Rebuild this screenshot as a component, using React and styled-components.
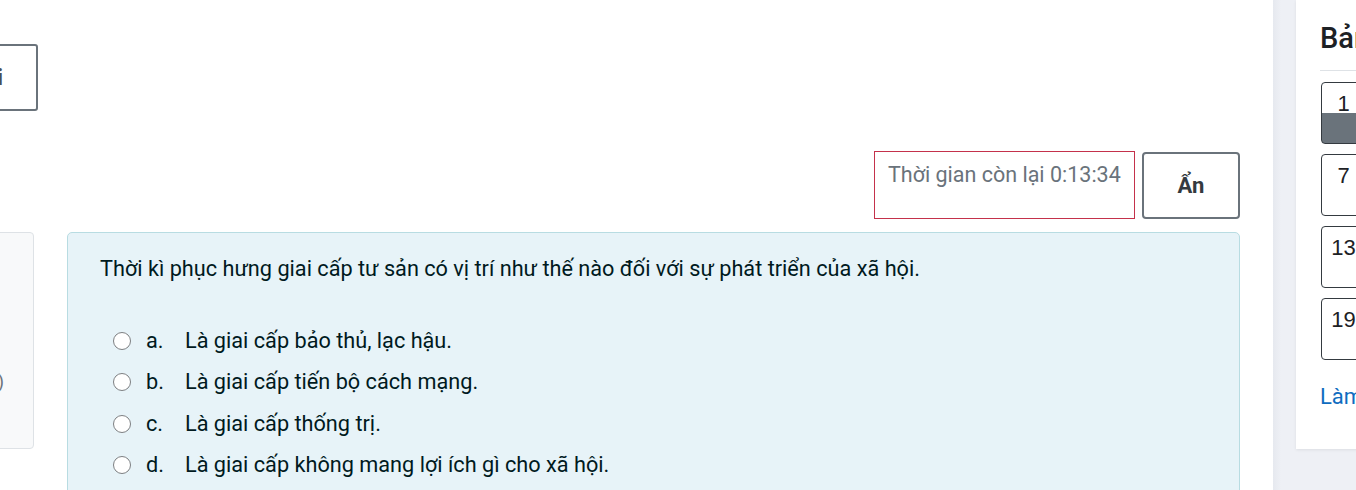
import React from "react";
import styled, { createGlobalStyle } from "styled-components";

const GlobalStyle = createGlobalStyle`
  html, body {
    margin: 0;
    padding: 0;
    overflow: hidden;
    background: #fff;
    font-family: Roboto, "Noto Sans", "Liberation Sans", sans-serif;
  }
`;

const options = [
  { key: "a.", text: "Là giai cấp bảo thủ, lạc hậu." },
  { key: "b.", text: "Là giai cấp tiến bộ cách mạng." },
  { key: "c.", text: "Là giai cấp thống trị." },
  { key: "d.", text: "Là giai cấp không mang lợi ích gì cho xã hội." },
];

const navButtons = [
  { num: 1, answered: true },
  { num: 7 },
  { num: 13 },
  { num: 19 },
];

const App = () => {
  return (
    <>
      <GlobalStyle />
      <Page>
        <Main>
          <TopRow>
            <OutlineButton>Quay lại</OutlineButton>
          </TopRow>
          <TimerRow>
            <Timer>Thời gian còn lại 0:13:34</Timer>
            <HideButton>Ẩn</HideButton>
          </TimerRow>
          <QuestionRow>
            <InfoCard>
              <InfoText>Đạt điểm (1,00)</InfoText>
            </InfoCard>
            <Formulation>
              <QText>
                Thời kì phục hưng giai cấp tư sản có vị trí như thế nào đối với
                sự phát triển của xã hội.
              </QText>
              <Answers>
                {options.map((o) => (
                  <AnswerRow key={o.key}>
                    <Radio />
                    <Letter>{o.key}</Letter>
                    <span>{o.text}</span>
                  </AnswerRow>
                ))}
              </Answers>
            </Formulation>
          </QuestionRow>
        </Main>
        <Drawer>
          <NavCard>
            <NavTitle>Bảng điều hướng bài kiểm tra</NavTitle>
            <NavList>
              {navButtons.map((b) => (
                <QnButton key={b.num} $answered={b.answered}>
                  <span>{b.num}</span>
                </QnButton>
              ))}
            </NavList>
            <FinishLink href="#">Làm xong bài...</FinishLink>
          </NavCard>
        </Drawer>
      </Page>
    </>
  );
};

const Page = styled.div`
  display: flex;
  width: 1356px;
  height: 490px;
  overflow: hidden;
`;

const Main = styled.div`
  width: 1273px;
  flex-shrink: 0;
  background: #fff;
  display: flex;
  flex-direction: column;
`;

const TopRow = styled.div`
  display: flex;
  padding-top: 44px;
`;

const OutlineButton = styled.button`
  width: 130px;
  height: 67px;
  margin-left: -92px;
  box-sizing: border-box;
  border: 2px solid #6a737b;
  border-radius: 3px;
  background: #fff;
  color: #495057;
  font-family: inherit;
  font-size: 21.5px;
  font-weight: 700;
  text-align: right;
  padding: 0 33px 0 0;
  white-space: nowrap;
  overflow: hidden;
`;

const TimerRow = styled.div`
  display: flex;
  justify-content: flex-end;
  align-items: center;
  gap: 7px;
  padding-right: 33px;
  margin-top: 40px;
`;

const Timer = styled.div`
  width: 261px;
  height: 68px;
  box-sizing: border-box;
  border: 1px solid #c4314b;
  padding: 8px 13px;
  color: #6a737b;
  font-size: 21.5px;
  line-height: 30px;
  white-space: nowrap;
`;

const HideButton = styled.button`
  width: 98px;
  height: 67px;
  box-sizing: border-box;
  border: 2px solid #6a737b;
  border-radius: 4px;
  background: #fff;
  color: #343a40;
  font-family: inherit;
  font-size: 22px;
  font-weight: 700;
  padding: 0;
`;

const QuestionRow = styled.div`
  display: flex;
  align-items: flex-start;
  gap: 33px;
  margin-top: 13px;
`;

const InfoCard = styled.div`
  width: 160px;
  height: 217px;
  margin-left: -126px;
  flex-shrink: 0;
  box-sizing: border-box;
  background: #f8f9fa;
  border: 1px solid #dee2e6;
  border-radius: 4px;
  padding: 138px 29px 0 0;
  text-align: right;
  color: #6a737b;
  font-size: 18px;
`;

const InfoText = styled.div`
  white-space: nowrap;
`;

const Formulation = styled.div`
  width: 1173px;
  min-height: 300px;
  box-sizing: border-box;
  background: #e7f3f8;
  border: 1px solid #b8dce2;
  border-radius: 5px;
  padding: 21px 32px;
  color: #001a1e;
  font-size: 21.7px;
`;

const QText = styled.div`
  line-height: 30px;
`;

const Answers = styled.div`
  margin-top: 36px;
  display: flex;
  flex-direction: column;
`;

const AnswerRow = styled.div`
  display: flex;
  align-items: center;
  height: 41.5px;
  line-height: 30px;
`;

const Radio = styled.span`
  width: 18px;
  height: 18px;
  box-sizing: border-box;
  border: 1.5px solid #7d7f82;
  border-radius: 50%;
  background: #fff;
  margin: 0 15px 0 13px;
  flex-shrink: 0;
`;

const Letter = styled.span`
  width: 39px;
  flex-shrink: 0;
`;

const Drawer = styled.div`
  flex: 1;
  background: linear-gradient(to right, #e6e9ef 0, #eef0f5 8px, #eef0f5 100%);
  padding-left: 23px;
`;

const NavCard = styled.div`
  height: 449px;
  box-sizing: border-box;
  background: #fff;
  box-shadow: 0 1px 3px rgba(0, 0, 0, 0.08);
  padding: 19px 0 0 24px;
  white-space: nowrap;
  overflow: hidden;
`;

const NavTitle = styled.div`
  font-size: 29px;
  color: #1d2125;
  font-weight: 500;
  line-height: 38px;
  padding-bottom: 13px;
  border-bottom: 1px solid #dee2e6;
`;

const NavList = styled.div`
  display: flex;
  flex-direction: column;
  gap: 10px;
  margin-top: 11px;
  padding-left: 1px;
`;

const QnButton = styled.div`
  width: 45px;
  height: 62px;
  box-sizing: border-box;
  border: 1px solid #343a40;
  border-radius: 4px;
  overflow: hidden;
  display: flex;
  flex-direction: column;
  font-family: "Liberation Sans", Arial, sans-serif;
  font-size: 22px;
  color: #1d2125;
  background: ${(p) =>
    p.$answered
      ? "linear-gradient(to bottom, #fff 0, #fff 30px, #6a737b 30px)"
      : "#fff"};
  span {
    padding-top: 9px;
    text-align: center;
    line-height: 24px;
  }
`;

const FinishLink = styled.a`
  display: block;
  margin-top: 24px;
  color: #0f6cbf;
  font-size: 22px;
  text-decoration: none;
`;

export default App;
